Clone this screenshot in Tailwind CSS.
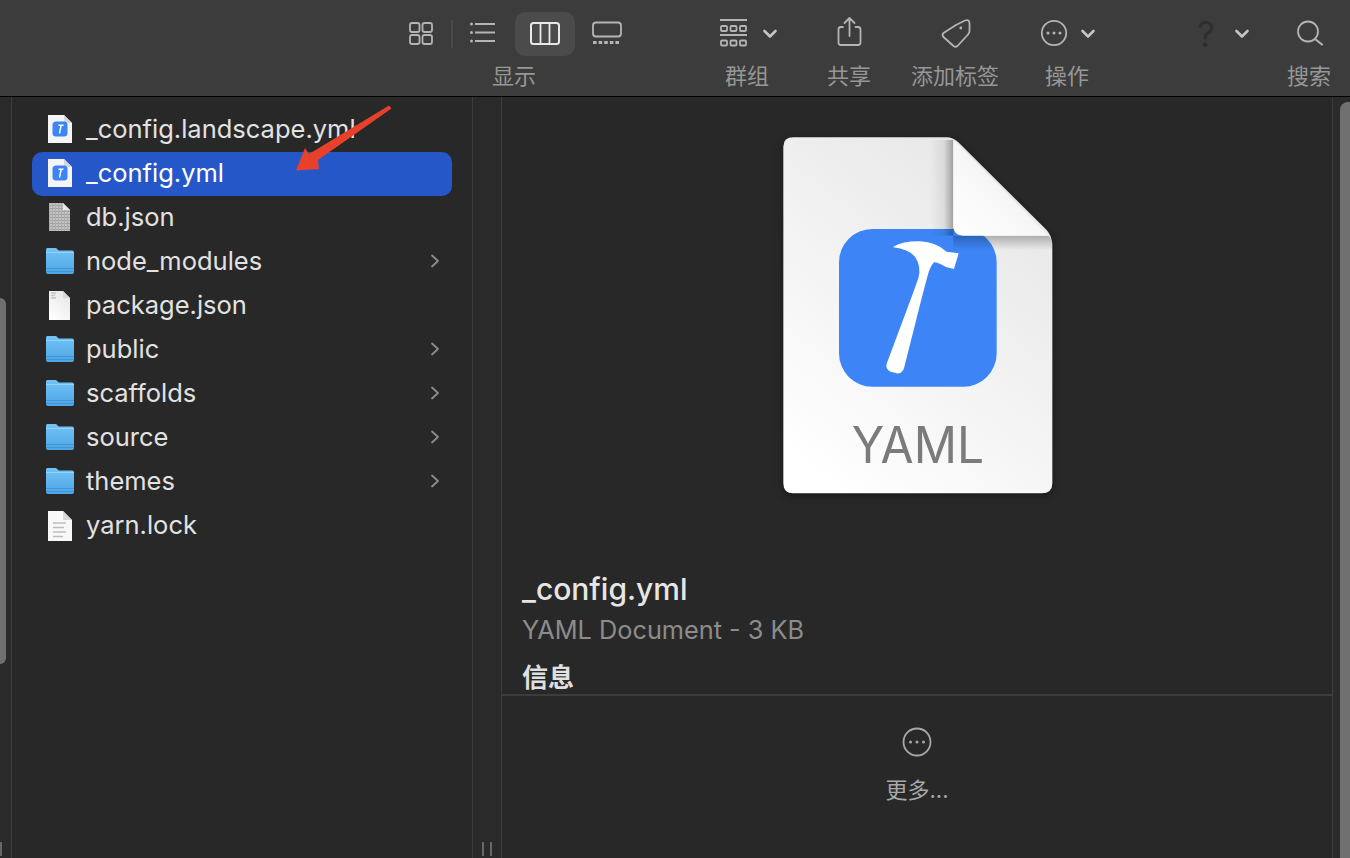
<!DOCTYPE html>
<html lang="zh">
<head>
<meta charset="utf-8">
<title>Finder</title>
<script src="https://cdn.jsdelivr.net/npm/@tailwindcss/browser@4"></script>
</head>
<body class="m-0 bg-[#282828]">
<svg class="absolute w-0 h-0" aria-hidden="true">
  <defs>
    <linearGradient id="fold" x1="0" y1="0" x2="0" y2="1"><stop offset="0" stop-color="#72c4f6"/><stop offset="1" stop-color="#4ea5e6"/></linearGradient>
    <linearGradient id="paper" x1="0.2" y1="1" x2="0.8" y2="0"><stop offset="0" stop-color="#ffffff"/><stop offset="0.55" stop-color="#f1f1f1"/><stop offset="1" stop-color="#e6e6e6"/></linearGradient>
    <linearGradient id="flap" x1="0" y1="1" x2="1" y2="0"><stop offset="0" stop-color="#ffffff"/><stop offset="0.6" stop-color="#f4f4f4"/><stop offset="1" stop-color="#dcdcdc"/></linearGradient>
    <linearGradient id="shl" x1="0" y1="0" x2="1" y2="0"><stop offset="0" stop-color="#000" stop-opacity="0"/><stop offset="0.6" stop-color="#000" stop-opacity="0.07"/><stop offset="1" stop-color="#000" stop-opacity="0.32"/></linearGradient>
    <linearGradient id="shb" x1="0" y1="1" x2="0" y2="0"><stop offset="0" stop-color="#000" stop-opacity="0"/><stop offset="1" stop-color="#000" stop-opacity="0.26"/></linearGradient>
    <pattern id="noise" width="3" height="3" patternUnits="userSpaceOnUse"><rect width="3" height="3" fill="#c2c2c2"/><rect width="3" height="1" fill="#a0a0a0"/><rect width="1" height="3" fill="#adadad"/></pattern>
    <symbol id="chev" viewBox="0 0 10 16"><path d="M2 2.5 L8 8 L2 13.5" fill="none" stroke="#8c8c8c" stroke-width="1.8" stroke-linecap="round" stroke-linejoin="round"/></symbol>
    <symbol id="folder" viewBox="0 0 28 30">
      <path d="M1.5 1 H9 Q10.5 1 11.5 2.2 L12.6 3.6 H26 Q28 3.6 28 5.6 V25 Q28 27 26 27 H2 Q0 27 0 25 V2.5 Q0 1 1.5 1Z" fill="url(#fold)"/>
      <rect x="0" y="5" width="28" height="1" fill="#93d3f8"/>
      <rect x="0" y="21" width="28" height="1" fill="#3f95d8"/>
      <rect x="0" y="24" width="28" height="1" fill="#3f95d8"/>
    </symbol>
    <symbol id="yaml" viewBox="0 0 28 30">
      <path d="M2 0 H18 L26 8 V28 H2Z" fill="#f5f5f5"/>
      <path d="M18 0 L26 8 H18Z" fill="#d6d6d6"/>
      <rect x="6.500" y="6.500" width="15" height="15" rx="3.500" fill="#3d85f6"/>
      <path d="M12.500 9.500 H17.500 V11 H15.800 L14.200 18.500 H12.800 L14.200 11 H12.500Z" fill="#fff"/>
    </symbol>
  </defs>
</svg>

<div class="w-[1350px] h-[858px] overflow-hidden flex flex-col bg-[#282828] font-['Inter','Noto_Sans_CJK_SC',sans-serif] relative">

  <header class="h-[97px] shrink-0 bg-[#3c3c3c] border-b border-black flex items-start pt-[12px] text-[#979797] text-[22px] leading-[24px]">
    <div class="ml-[394px] w-[240px] flex flex-col items-center">
      <svg width="240" height="44" viewBox="394 12 240 44" fill="none" stroke="#b4b4b4" stroke-width="1.800">
        <rect x="515" y="12" width="60" height="44" rx="10" fill="#4b4b4b" stroke="none"/>
        <rect x="410" y="23" width="9.500" height="9" rx="2"/><rect x="422.500" y="23" width="9.500" height="9" rx="2"/>
        <rect x="410" y="35" width="9.500" height="9" rx="2"/><rect x="422.500" y="35" width="9.500" height="9" rx="2"/>
        <path d="M452 20 V48" stroke="#4f4f4f" stroke-width="1.500"/>
        <path d="M475 24 H495 M475 32.500 H495 M475 41 H495"/>
        <circle cx="471.500" cy="24" r="1.500" fill="#b4b4b4" stroke="none"/><circle cx="471.500" cy="32.500" r="1.500" fill="#b4b4b4" stroke="none"/><circle cx="471.500" cy="41" r="1.500" fill="#b4b4b4" stroke="none"/>
        <rect x="531" y="23" width="28" height="21" rx="2.500" stroke="#e8e8e8" stroke-width="2"/>
        <path d="M540.500 23 V44 M549.500 23 V44" stroke="#e8e8e8" stroke-width="1.800"/>
        <rect x="593" y="22.500" width="28" height="14" rx="3"/>
        <path d="M593 42.500 H621" stroke-width="3" stroke-dasharray="3.600 2"/>
      </svg>
      <span class="mt-[8px]">显示</span>
    </div>

    <div class="ml-[73px] w-[80px] flex flex-col items-center">
      <svg width="80" height="44" viewBox="707 12 80 44" fill="none" stroke="#b4b4b4" stroke-width="1.800">
        <path d="M720 20 H747 M720 35 H747"/>
        <rect x="721" y="26" width="6" height="5" rx="1"/><rect x="730.500" y="26" width="6" height="5" rx="1"/><rect x="740" y="26" width="6" height="5" rx="1"/>
        <rect x="721" y="40.500" width="6" height="5" rx="1"/><rect x="730.500" y="40.500" width="6" height="5" rx="1"/><rect x="740" y="40.500" width="6" height="5" rx="1"/>
        <path d="M764.500 31 L770 36.500 L775.500 31" stroke="#c4c4c4" stroke-width="2.600" stroke-linecap="round" stroke-linejoin="round"/>
      </svg>
      <span class="mt-[8px]">群组</span>
    </div>

    <div class="ml-[22px] w-[80px] flex flex-col items-center">
      <svg width="80" height="44" viewBox="809 12 80 44" fill="none" stroke="#b4b4b4" stroke-width="1.800" stroke-linecap="round" stroke-linejoin="round">
        <path d="M843 27 H841 Q838.500 27 838.500 29.500 V42.500 Q838.500 45 841 45 H858 Q860.500 45 860.500 42.500 V29.500 Q860.500 27 858 27 H855.500"/>
        <path d="M849.500 36 V18 M844.500 23 L849.500 18 L854.500 23"/>
      </svg>
      <span class="mt-[8px]">共享</span>
    </div>

    <div class="ml-[16px] w-[100px] flex flex-col items-center">
      <svg width="100" height="44" viewBox="905 12 100 44" fill="none" stroke="#b4b4b4" stroke-width="1.800" stroke-linejoin="round">
        <path d="M956 25 L965 20.500 Q969.500 19 969.500 23.500 L969.500 31 Q969.500 33 968 34.500 L957.500 46 Q955.500 47.500 953.500 46 L943.500 37 Q941.500 35 943.500 33 Z"/>
        <circle cx="960.800" cy="28" r="1.400" fill="#b4b4b4" stroke="none"/>
      </svg>
      <span class="mt-[8px]">添加标签</span>
    </div>

    <div class="ml-[22px] w-[80px] flex flex-col items-center">
      <svg width="80" height="44" viewBox="1027 12 80 44" fill="none" stroke="#b4b4b4" stroke-width="1.800">
        <circle cx="1054" cy="33" r="12.200"/>
        <circle cx="1048" cy="33" r="1.500" fill="#b4b4b4" stroke="none"/><circle cx="1054" cy="33" r="1.500" fill="#b4b4b4" stroke="none"/><circle cx="1060" cy="33" r="1.500" fill="#b4b4b4" stroke="none"/>
        <path d="M1082.500 31 L1088 36.500 L1093.500 31" stroke="#c4c4c4" stroke-width="2.600" stroke-linecap="round" stroke-linejoin="round"/>
      </svg>
      <span class="mt-[8px]">操作</span>
    </div>

    <div class="ml-[73px] w-[80px] h-[44px] flex items-center justify-start relative">
      <span class="ml-[17px] text-[35px] leading-[44px] font-normal text-[#2e2e2e]">?</span>
      <svg class="absolute left-[50px] top-[16px]" width="24" height="12" viewBox="1230 28 24 12" fill="none" stroke="#c4c4c4" stroke-width="2.600" stroke-linecap="round" stroke-linejoin="round">
        <path d="M1236.500 31 L1242 36.500 L1247.500 31"/>
      </svg>
    </div>

    <div class="ml-[19px] w-[60px] flex flex-col items-center">
      <svg width="60" height="44" viewBox="1279 12 60 44" fill="none" stroke="#b4b4b4" stroke-width="1.800" stroke-linecap="round">
        <circle cx="1308" cy="31.500" r="10"/>
        <path d="M1315 39 L1322 44.500" stroke-width="2.200"/>
      </svg>
      <span class="mt-[8px]">搜索</span>
    </div>
  </header>

  <main class="flex-1 flex min-h-0">
    <div class="w-[12px] shrink-0 border-r border-[#3d3d3d] flex flex-col pt-[201px] pb-[2px] bg-[#2a2a2a]">
      <div class="w-[6px] h-[366px] rounded-r-[6px] bg-[#707070]"></div>
      <div class="mt-auto w-[2px] h-[14px] bg-[#666666]"></div>
    </div>

    <section class="w-[460px] shrink-0 px-[20px] pt-[11px] text-[25.5px] leading-[36px] text-[#e2e2e2] [&_span]:-translate-y-px">
      <div class="h-[44px] flex items-center pl-[14px]">
        <svg width="28" height="30" class="shrink-0"><use href="#yaml"/></svg>
        <span class="ml-[12px]">_config.landscape.yml</span>
      </div>
      <div class="h-[44px] flex items-center pl-[14px] rounded-[10px] bg-[#2557c9] text-white">
        <svg width="28" height="30" class="shrink-0"><use href="#yaml"/></svg>
        <span class="ml-[12px]">_config.yml</span>
      </div>
      <div class="h-[44px] flex items-center pl-[14px]">
        <svg width="28" height="30" viewBox="0 1 28 30" class="shrink-0"><path d="M3 1 H17 L24 8 V29 H3Z" fill="url(#noise)"/><path d="M17 1 L24 8 H17Z" fill="#e8e8e8"/></svg>
        <span class="ml-[12px]">db.json</span>
      </div>
      <div class="h-[44px] flex items-center pl-[14px] pr-[12px]">
        <svg width="28" height="30" class="shrink-0"><use href="#folder"/></svg>
        <span class="ml-[12px] flex-1">node_modules</span>
        <svg width="10" height="16" class="shrink-0 -translate-y-px"><use href="#chev"/></svg>
      </div>
      <div class="h-[44px] flex items-center pl-[14px]">
        <svg width="28" height="30" viewBox="0 1 28 30" class="shrink-0"><path d="M3 1 H17 L24 8 V30 H3Z" fill="url(#paper)"/><path d="M17 1 L24 8 H17Z" fill="#d8d8d8"/><path d="M5 3 H10 M5 5.500 H9 M5 8 H10" stroke="#c4c4c4" stroke-width="1.300"/></svg>
        <span class="ml-[12px]">package.json</span>
      </div>
      <div class="h-[44px] flex items-center pl-[14px] pr-[12px]">
        <svg width="28" height="30" class="shrink-0"><use href="#folder"/></svg>
        <span class="ml-[12px] flex-1">public</span>
        <svg width="10" height="16" class="shrink-0 -translate-y-px"><use href="#chev"/></svg>
      </div>
      <div class="h-[44px] flex items-center pl-[14px] pr-[12px]">
        <svg width="28" height="30" class="shrink-0"><use href="#folder"/></svg>
        <span class="ml-[12px] flex-1">scaffolds</span>
        <svg width="10" height="16" class="shrink-0 -translate-y-px"><use href="#chev"/></svg>
      </div>
      <div class="h-[44px] flex items-center pl-[14px] pr-[12px]">
        <svg width="28" height="30" class="shrink-0"><use href="#folder"/></svg>
        <span class="ml-[12px] flex-1">source</span>
        <svg width="10" height="16" class="shrink-0 -translate-y-px"><use href="#chev"/></svg>
      </div>
      <div class="h-[44px] flex items-center pl-[14px] pr-[12px]">
        <svg width="28" height="30" class="shrink-0"><use href="#folder"/></svg>
        <span class="ml-[12px] flex-1">themes</span>
        <svg width="10" height="16" class="shrink-0 -translate-y-px"><use href="#chev"/></svg>
      </div>
      <div class="h-[44px] flex items-center pl-[14px]">
        <svg width="28" height="30" viewBox="0 -2 28 30" class="shrink-0"><path d="M2 -2 H17 L26 7 V28 H2Z" fill="#f8f8f8"/><path d="M17 -2 L26 7 H17Z" fill="#d8d8d8"/><path d="M7 10 H20 M7 14.500 H18 M7 19 H20 M7 23.500 H17" stroke="#bdbdbd" stroke-width="1.500"/></svg>
        <span class="ml-[12px]">yarn.lock</span>
      </div>
    </section>

    <div class="w-[30px] shrink-0 border-x border-[#3d3d3d] bg-[#2a2a2a] flex items-end justify-center gap-[6px] pb-[2px]">
      <div class="w-[2px] h-[14px] bg-[#666666]"></div>
      <div class="w-[2px] h-[14px] bg-[#666666]"></div>
    </div>

    <section class="w-[830px] shrink-0 flex flex-col">
      <div class="h-[599px] shrink-0 pt-[28px] flex flex-col border-b-2 border-[#3c3c3c]">
        <svg width="300" height="380" viewBox="0 0 900 1140" class="shrink-0 self-center ml-[6px] drop-shadow-[0_2px_4px_rgba(0,0,0,0.4)]">
          <path d="M70 37 H530 Q548 37 565 52 L830 315 Q847 335 847 360 V1075 Q847 1105 815 1105 H70 Q40 1105 40 1075 V65 Q40 37 70 37Z" fill="url(#paper)"/>
          <rect x="207" y="312" width="473" height="473" rx="100" fill="#3d85f6"/>
          <path d="M370 365 Q400 348 450 349 Q500 352 530 380 L566 385 L552 432 L528 426 Q505 412 492 412 Q480 425 472 455 L455 520 L402 730 Q396 748 380 745 L362 740 Q345 732 350 716 L425 515 L445 460 Q455 425 435 395 Q415 372 370 367Z" fill="#ffffff"/>
          <rect x="480" y="45" width="70" height="287" fill="url(#shl)"/>
          <path d="M550 332 H835 L847 345 V375 H550Z" fill="url(#shb)"/>
          <path d="M550 45 L835 332 H582 Q550 332 550 300Z" fill="url(#flap)"/>
          <text x="245" y="1015" font-size="150" fill="#7b7b7b" textLength="397" lengthAdjust="spacingAndGlyphs">YAML</text>
        </svg>
        <h2 class="ml-[20px] mt-[66px] text-[30px] leading-[36px] font-medium text-[#e6e6e6]">_config.yml</h2>
        <p class="ml-[20px] mt-[5px] text-[25.3px] leading-[36px] text-[#8c8c8c]">YAML Document - 3 KB</p>
        <h3 class="ml-[20px] mt-[12px] text-[26px] leading-[36px] font-bold text-[#e0e0e0]">信息</h3>
      </div>
      <div class="flex flex-col items-center pt-[31px] text-[#a8a8a8]">
        <svg width="30" height="30" viewBox="0 0 30 30" fill="none" stroke="#a8a8a8" stroke-width="1.800">
          <circle cx="15" cy="15" r="13.500"/>
          <circle cx="8.500" cy="15" r="1.500" fill="#a8a8a8" stroke="none"/><circle cx="15" cy="15" r="1.500" fill="#a8a8a8" stroke="none"/><circle cx="21.500" cy="15" r="1.500" fill="#a8a8a8" stroke="none"/>
        </svg>
        <span class="mt-[19px] text-[22px] leading-[28px]">更多...</span>
      </div>
    </section>

    <div class="flex-1 border-l border-[#3d3d3d] bg-[#2b2b2b] pt-[5px] pl-[7px]">
      <div class="w-[10px] h-full rounded-tl-[8px] bg-[#707070]"></div>
    </div>
  </main>

  <svg class="absolute left-[290px] top-[100px]" width="106" height="76" viewBox="290 100 106 76">
    <polygon points="389,105.500 391.500,108.500 318,160 319,169 296,170.500 305,148 309,154" fill="#e8402a"/>
  </svg>
</div>
</body>
</html>
